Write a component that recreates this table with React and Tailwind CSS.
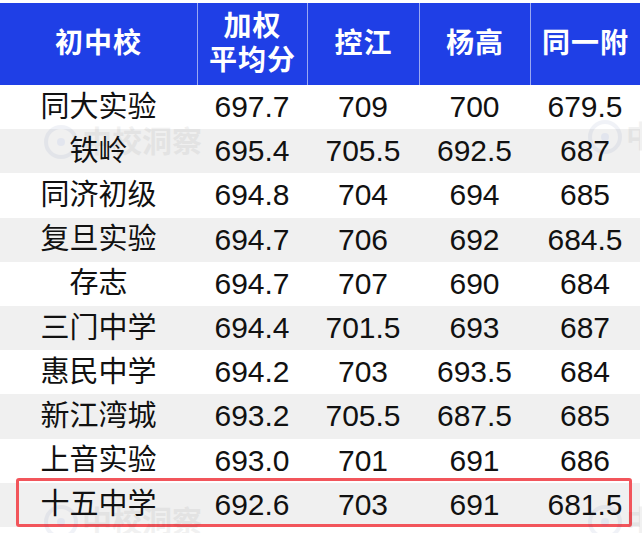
import React from "react";

const rows = [
  ["同大实验", "697.7", "709", "700", "679.5"],
  ["铁岭", "695.4", "705.5", "692.5", "687"],
  ["同济初级", "694.8", "704", "694", "685"],
  ["复旦实验", "694.7", "706", "692", "684.5"],
  ["存志", "694.7", "707", "690", "684"],
  ["三门中学", "694.4", "701.5", "693", "687"],
  ["惠民中学", "694.2", "703", "693.5", "684"],
  ["新江湾城", "693.2", "705.5", "687.5", "685"],
  ["上音实验", "693.0", "701", "691", "686"],
  ["十五中学", "692.6", "703", "691", "681.5"],
];

const font = { fontFamily: '"Liberation Sans", "Noto Sans CJK SC", sans-serif' };
const cols = ["w-[197px]", "w-[110px]", "w-[112px]", "w-[111px]", "w-[110px]"];

function Watermark({ className }) {
  return (
    <div className={"pointer-events-none absolute flex items-center gap-1 whitespace-nowrap opacity-[0.06] " + className}>
      <div className="flex h-[34px] w-[34px] shrink-0 items-center justify-center rounded-full border-[4px] border-[#1e3a8a]">
        <div className="h-[8px] w-[8px] rounded-full bg-[#1d4ed8]" />
      </div>
      <span className="text-[30px] font-bold leading-none text-[#222]">中校洞察</span>
    </div>
  );
}

export default function App() {
  return (
    <div className="relative h-[533px] w-[642px] overflow-hidden bg-white pt-[3px]" style={font}>
      <div className="w-[640px]">
        <div className="flex h-[82px] bg-[#1f3fe6] text-white">
          {["初中校", null, "控江", "杨高", "同一附"].map((h, i) => (
            <div
              key={i}
              className={
                cols[i] +
                " flex flex-col items-center justify-center text-[28px] font-bold leading-[34px] tracking-[1px] " +
                (i > 0 ? "border-l border-[#9aa8f2]" : "")
              }
            >
              {h === null ? (
                <>
                  <span>加权</span>
                  <span>平均分</span>
                </>
              ) : (
                <span>{h}</span>
              )}
            </div>
          ))}
        </div>
        {rows.map((r, ri) => (
          <div
            key={ri}
            className={
              "relative flex h-[44.2px] items-center leading-none text-[#111] " +
              (ri % 2 === 1 ? "bg-[#f0f0f0]" : "bg-white")
            }
          >
            {r.map((c, ci) => (
              <div
                key={ci}
                className={cols[ci] + " flex justify-center " + (ci === 0 ? "text-[29px]" : "text-[30px]")}
              >
                {c}
              </div>
            ))}
            {ri === rows.length - 1 && (
              <div className="absolute left-[16px] right-[8px] top-[-5px] bottom-[0px] rounded-[3px] border-[3px] border-[#f2555b]" />
            )}
          </div>
        ))}
      </div>
      <Watermark className="left-[44px] top-[125px]" />
      <Watermark className="left-[588px] top-[120px]" />
      <Watermark className="left-[44px] top-[505px]" />
      <Watermark className="left-[588px] top-[505px]" />
    </div>
  );
}
